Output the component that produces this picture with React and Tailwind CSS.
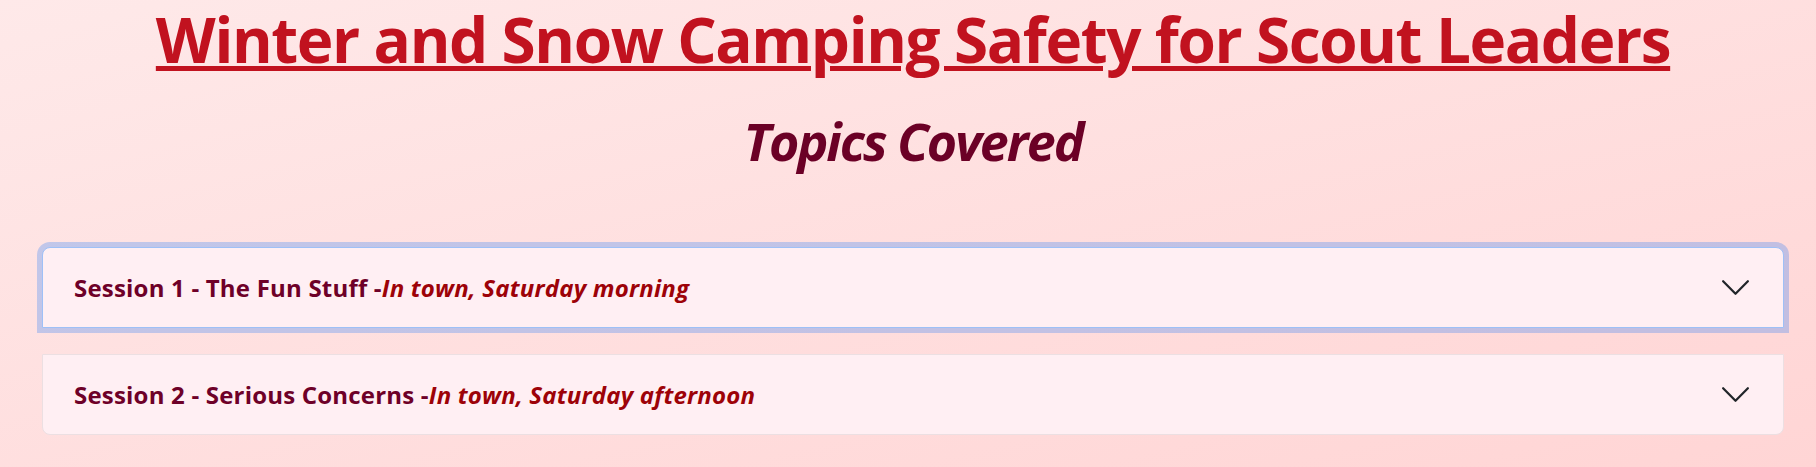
const sessions = [
  { title: "Session 1 - The Fun Stuff -", when: "In town, Saturday morning", focused: true },
  { title: "Session 2 - Serious Concerns -", when: "In town, Saturday afternoon", focused: false },
];

function Chevron() {
  return (
    <svg viewBox="0 0 16 16" className="h-[33px] w-[33px] shrink-0" fill="none">
      <path d="M2 5L8 11L14 5" stroke="#212529" strokeWidth="1.1" strokeLinecap="round" strokeLinejoin="round" />
    </svg>
  );
}

export default function App() {
  return (
    <div className="min-h-[467px] bg-gradient-to-br from-[#fee9e9] to-[#ffd5d5] font-['Open_Sans',sans-serif] pl-[42px] pr-[32px] pt-[7px]">
      <h1 className="text-center text-[62px] font-bold leading-[64px] tracking-[-1.38px] text-[#c1121f]">
        <span className="underline decoration-[5px] underline-offset-[3px]">
          Winter and Snow Camping Safety for Scout Leaders
        </span>
      </h1>
      <h2 className="mt-[44px] text-center text-[52px] font-bold italic leading-none tracking-[-2px] text-[#6b0026]">
        Topics Covered
      </h2>

      <div className="mt-[80px] flex flex-col gap-[26px]">
        {sessions.map((s, i) => (
          <div
            key={i}
            className={
              s.focused
                ? "flex h-[81px] items-center justify-between rounded-t-[8px] border border-[#9ec0f7] bg-[#ffeff3] pl-[31px] pr-[31px] shadow-[0_0_0_5px_rgba(13,110,253,0.25)]"
                : "flex h-[81px] items-center justify-between rounded-b-[8px] border border-[#ecdfe2] bg-[#ffeff3] pl-[31px] pr-[31px]"
            }
          >
            <span className="text-[24px] font-bold tracking-[0.2px] text-[#6e0028]">
              {s.title}
              <em className="text-[#9d0208]">{s.when}</em>
            </span>
            <Chevron />
          </div>
        ))}
      </div>
    </div>
  );
}
